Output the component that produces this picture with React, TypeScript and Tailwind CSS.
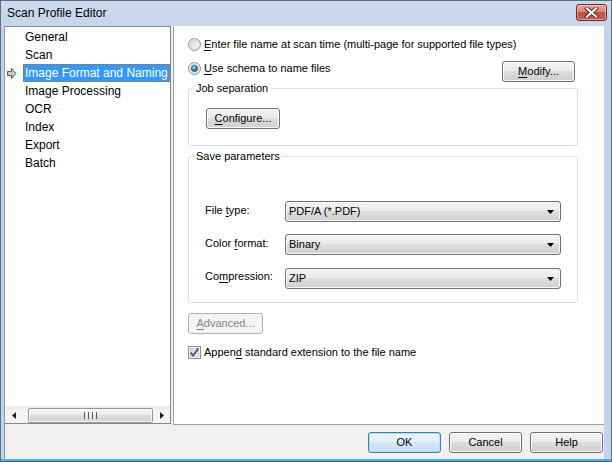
import React from "react";

const F = "font-['Liberation_Sans',Arial,sans-serif]";

function U({ children }: { children: React.ReactNode }) {
  return <span className="underline underline-offset-[2px] decoration-[1px]">{children}</span>;
}

function Radio({ checked, id }: { checked?: boolean; id: string }) {
  return (
    <svg width="13" height="13" viewBox="0 0 13 13" className="shrink-0">
      <defs>
        <linearGradient id={`o${id}`} x1="0" y1="0" x2="1" y2="1">
          <stop offset="0" stopColor="#d2d2d2" />
          <stop offset="1" stopColor="#fbfbfb" />
        </linearGradient>
        <radialGradient id={`d${id}`} cx="0.4" cy="0.35" r="0.75">
          <stop offset="0" stopColor="#b8ecff" />
          <stop offset="0.45" stopColor="#2b90d4" />
          <stop offset="1" stopColor="#0c3f70" />
        </radialGradient>
      </defs>
      <circle cx="6.5" cy="6.5" r="6" fill="#f5f5f5" stroke="#8f8f8f" />
      <circle cx="6.5" cy="6.5" r="4.6" fill={`url(#o${id})`} stroke="#c9c9c9" strokeWidth="0.6" />
      {checked && <circle cx="6.5" cy="6.5" r="3.1" fill={`url(#d${id})`} stroke="#163d64" strokeWidth="0.6" />}
    </svg>
  );
}

function Check() {
  return (
    <svg width="13" height="13" viewBox="0 0 13 13" className="shrink-0">
      <defs>
        <linearGradient id="cbg" x1="0" y1="0" x2="1" y2="1">
          <stop offset="0" stopColor="#cbcfd5" />
          <stop offset="1" stopColor="#f7f7f7" />
        </linearGradient>
      </defs>
      <rect x="0.5" y="0.5" width="12" height="12" fill="#f4f4f4" stroke="#8e8f8f" />
      <rect x="2.5" y="2.5" width="8" height="8" fill="url(#cbg)" stroke="#b4b9be" strokeWidth="0.6" />
      <path d="M2.6 6.6 L5.2 9.6 L10.4 2.4" fill="none" stroke="#3f5b9c" strokeWidth="1.8" strokeLinejoin="miter" />
    </svg>
  );
}

const btnBase =
  "h-[21px] rounded-[3px] border flex items-center justify-center text-[11px] leading-none";
const btnNormal =
  "border-[#707070] bg-[linear-gradient(#f2f2f2,#ebebeb_45%,#dddddd_50%,#cfcfcf)] shadow-[inset_0_0_0_1px_rgba(255,255,255,0.85)] text-black";

function Btn({ children, className }: { children: React.ReactNode; className?: string }) {
  return <div className={`${btnBase} ${btnNormal} ${className ?? ""}`}>{children}</div>;
}

function Combo({ value }: { value: string }) {
  return (
    <div className="w-[276px] h-[21px] rounded-[3px] border border-[#707070] bg-[linear-gradient(#f2f2f2,#ebebeb_45%,#dddddd_50%,#cfcfcf)] shadow-[inset_0_0_0_1px_rgba(255,255,255,0.85)] flex items-center pl-[3px] pr-[6px] justify-between">
      <span className="text-[11px] text-black">{value}</span>
      <svg width="7" height="4" viewBox="0 0 7 4">
        <path d="M0 0 H7 L3.5 4 Z" fill="#000" />
      </svg>
    </div>
  );
}

function CloseBtn() {
  return (
    <div className="w-[31px] h-[17px] rounded-[3px] border border-[#6a2a2a] bg-[linear-gradient(#e8aa9c,#d88374_45%,#c4503f_50%,#c9614f)] shadow-[inset_0_0_0_1px_rgba(255,220,210,0.5)] flex items-center justify-center">
      <svg width="15" height="11" viewBox="0 0 15 11">
        <path d="M3 1.5 L12 9.5 M12 1.5 L3 9.5" stroke="#5a2020" strokeWidth="4" strokeLinecap="square" />
        <path d="M3 1.5 L12 9.5 M12 1.5 L3 9.5" stroke="#ffffff" strokeWidth="2.2" strokeLinecap="square" />
      </svg>
    </div>
  );
}

const items = ["General", "Scan", "Image Format and Naming", "Image Processing", "OCR", "Index", "Export", "Batch"];

function ListPanel() {
  return (
    <div className="w-[166px] h-[398px] bg-white border-t border-r border-b border-[#828790] flex flex-col">
      <div className="flex-1 pt-[1px]">
        {items.map((it, i) => {
          const sel = i === 2;
          return (
            <div key={it} className="h-[18px] flex items-center">
              <div className="w-[18px] h-[18px] flex items-center pl-[2px]">
                {sel && (
                  <svg width="10" height="11" viewBox="0 0 10 11">
                    <path d="M0.5 3.5 H4.5 V0.5 L9 5.5 L4.5 10.5 V7.5 H0.5 Z" fill="#c8c8c8" stroke="#555" strokeWidth="1" />
                  </svg>
                )}
              </div>
              {sel ? (
                <span className="h-[18px] flex items-center px-[1px] bg-[#3399ff] text-white text-[12px] border border-dotted border-[#cc6600]">
                  {it}
                </span>
              ) : (
                <span className="px-[2px] text-[12px] text-black">{it}</span>
              )}
            </div>
          );
        })}
      </div>
      <div className="h-[17px] flex items-center bg-[linear-gradient(#ececec,#f6f6f6_30%,#f3f3f3)] border-t border-[#f0f0f0]">
        <div className="w-[17px] h-full flex items-center justify-center">
          <svg width="4" height="7" viewBox="0 0 4 7">
            <path d="M4 0 V7 L0 3.5 Z" fill="#222" />
          </svg>
        </div>
        <div className="w-[6px]" />
        <div className="w-[125px] h-[15px] rounded-[2px] border border-[#979797] bg-[linear-gradient(#f5f5f5,#ececec_45%,#dcdcdc_50%,#d2d2d2)] shadow-[inset_0_0_0_1px_rgba(255,255,255,0.8)] flex items-center justify-center gap-[1px]">
          <div className="w-[1px] h-[7px] bg-[#5a5a5a]" />
          <div className="w-[1px] h-[7px] bg-[#f8f8f8]" />
          <div className="w-[1px] h-[7px] bg-[#5a5a5a]" />
          <div className="w-[1px] h-[7px] bg-[#f8f8f8]" />
          <div className="w-[1px] h-[7px] bg-[#5a5a5a]" />
          <div className="w-[1px] h-[7px] bg-[#f8f8f8]" />
          <div className="w-[1px] h-[7px] bg-[#5a5a5a]" />
        </div>
        <div className="w-[17px] h-full flex items-center justify-center">
          <svg width="4" height="7" viewBox="0 0 4 7">
            <path d="M0 0 V7 L4 3.5 Z" fill="#222" />
          </svg>
        </div>
      </div>
    </div>
  );
}

function RightPanel() {
  return (
    <div className="w-[431px] h-[399px] bg-white border-l border-b border-[#a0a0a0] pl-[14px] pr-[26px] pt-[10px] flex flex-col text-[11px] text-black">
      <div className="h-[16px] flex items-center gap-[3px]">
        <Radio id="r1" />
        <span>
          <U>E</U>nter file name at scan time (multi-page for supported file types)
        </span>
      </div>
      <div className="h-[20px] mt-[8px] flex items-start justify-between">
        <div className="h-[16px] flex items-center gap-[3px]">
          <Radio id="r2" checked />
          <span>
            <U>U</U>se schema to name files
          </span>
        </div>
        <Btn className="w-[73px] mt-[1px] mr-[3px]">
          <span>
            <U>M</U>odify...
          </span>
        </Btn>
      </div>
      <fieldset className="h-[66px] border border-[#d5dfe5] rounded-[3px] px-[5px]">
        <legend className="px-[2px] leading-[16px] text-[11px]">Job separation</legend>
        <div className="ml-[12px] mt-[12px]">
          <Btn className="w-[74px]">
            <span>
              <U>C</U>onfigure...
            </span>
          </Btn>
        </div>
      </fieldset>
      <fieldset className="h-[155px] mt-[2px] border border-[#d5dfe5] rounded-[3px] px-[5px]">
        <legend className="px-[2px] leading-[16px] text-[11px]">Save parameters</legend>
        <div className="ml-[11px] mt-[37px] flex flex-col">
          <div className="flex items-center h-[21px]">
            <span className="w-[80px] -mt-[3px]">
              File <U>t</U>ype:
            </span>
            <Combo value="PDF/A (*.PDF)" />
          </div>
          <div className="flex items-center h-[21px] mt-[12px]">
            <span className="w-[80px] -mt-[2px]">
              Color <U>f</U>ormat:
            </span>
            <Combo value="Binary" />
          </div>
          <div className="flex items-center h-[21px] mt-[13px]">
            <span className="w-[80px] -mt-[4px]">
              Co<U>m</U>pression:
            </span>
            <Combo value="ZIP" />
          </div>
        </div>
      </fieldset>
      <div className="mt-[10px]">
        <div className={`${btnBase} w-[75px] border-[#adb2b5] bg-[#f4f4f4] text-[#838383]`}>
          <span>
            <U>A</U>dvanced...
          </span>
        </div>
      </div>
      <div className="h-[16px] mt-[10px] flex items-center gap-[3px]">
        <Check />
        <span>
          Appen<U>d</U> standard extension to the file name
        </span>
      </div>
    </div>
  );
}

export default function App() {
  return (
    <div
      className={`${F} w-[612px] h-[462px] flex flex-col bg-[linear-gradient(#cbdaeb,#c2d4ea_40px,#c2d4ea)] border-l border-t border-r border-[#5c6e84] overflow-hidden`}
    >
      <div className="h-[25px] shrink-0 flex items-center justify-between pl-[6px] pr-[4px]">
        <span className="text-[12px] text-black -mt-[1px]">Scan Profile Editor</span>
        <div className="-mt-[2px]">
          <CloseBtn />
        </div>
      </div>
      <div className="h-[433px] shrink-0 ml-[3px] mr-[7px] bg-[#f0f0f0] border-l border-[#8b97a6] flex flex-col">
        <div className="flex gap-[2px] h-[399px]">
          <ListPanel />
          <RightPanel />
        </div>
        <div className="flex-1 flex justify-end items-start gap-[8px] pt-[7px] pr-[1px]">
          <div
            className={`${btnBase} w-[73px] border-[#3c7fb1] bg-[linear-gradient(#eef5fb,#e4eff9_45%,#d5e6f4_50%,#c9ddf0)] shadow-[inset_0_0_0_1px_#b8dcf3] text-black`}
          >
            OK
          </div>
          <Btn className="w-[73px]">Cancel</Btn>
          <Btn className="w-[73px]">Help</Btn>
        </div>
      </div>
      <div className="h-[3px] shrink-0 bg-[linear-gradient(#46b0e2,#46b0e2_66%,#2d6c94_66%)]" />
    </div>
  );
}
